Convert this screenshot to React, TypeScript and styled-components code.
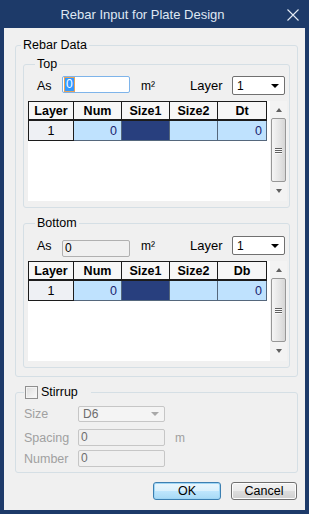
import { Fragment } from "react";
import styled, { createGlobalStyle } from "styled-components";

const GlobalStyle = createGlobalStyle`
  html, body {
    margin: 0;
    padding: 0;
    background: #1d3a69;
  }
  body {
    font-family: "Liberation Sans", Arial, sans-serif;
    font-size: 12px;
    color: #000;
  }
`;

type Row = { layer: string; num: string; dt: string };

const topRows: Row[] = [{ layer: "1", num: "0", dt: "0" }];
const bottomRows: Row[] = [{ layer: "1", num: "0", dt: "0" }];

function Scroll(): JSX.Element {
  return (
    <ScrollBar>
      <Arrow>
        <Tri $dir="up" />
      </Arrow>
      <Thumb>
        <Grip />
        <Grip />
        <Grip />
      </Thumb>
      <Arrow>
        <Tri $dir="down" />
      </Arrow>
    </ScrollBar>
  );
}

function RebarGrid({ lastCol, rows }: { lastCol: string; rows: Row[] }): JSX.Element {
  return (
    <GridBox>
      <Table>
        {["Layer", "Num", "Size1", "Size2", lastCol].map((h) => (
          <Cell key={h} $kind="head">{h}</Cell>
        ))}
        {rows.map((r, i) => (
          <Fragment key={i}>
            <Cell $kind="layer">{r.layer}</Cell>
            <Cell $kind="value">{r.num}</Cell>
            <Cell $kind="dark" />
            <Cell $kind="value" />
            <Cell $kind="value">{r.dt}</Cell>
          </Fragment>
        ))}
      </Table>
      <Scroll />
    </GridBox>
  );
}

function LayerSection({
  title,
  focused,
  lastCol,
  rows,
  top,
}: {
  title: string;
  focused: boolean;
  lastCol: string;
  rows: Row[];
  top: number;
}): JSX.Element {
  return (
    <Group $w={267} $mt={top} $ml={7} $pad="0 2px 6px 4px">
      <Legend $ml={7}>{title}</Legend>
      <FieldRow $mt={focused ? 5 : 6}>
        <AsLabel>As</AsLabel>
        <AsInput $focused={focused}>
          {focused ? <Selected>0</Selected> : "0"}
        </AsInput>
        <Unit>m²</Unit>
        <LayerLabel>Layer</LayerLabel>
        <Select>
          <span>1</span>
          <Caret />
        </Select>
      </FieldRow>
      <RebarGrid lastCol={lastCol} rows={rows} />
    </Group>
  );
}

export default function App(): JSX.Element {
  return (
    <>
      <GlobalStyle />
      <Window>
        <TitleBar>
          <Title>Rebar Input for Plate Design</Title>
          <Close>
            <svg width="12" height="12" viewBox="0 0 12 12">
              <path d="M0.5 0.5 L11.5 11.5 M11.5 0.5 L0.5 11.5" stroke="#e4ebf5" strokeWidth="1.1" />
            </svg>
          </Close>
        </TitleBar>
        <Client>
          <Group $w={283} $pad="0 0 8px 0">
            <Legend $ml={5}>Rebar Data</Legend>
            <LayerSection title="Top" focused lastCol="Dt" rows={topRows} top={5} />
            <LayerSection title="Bottom" focused={false} lastCol="Db" rows={bottomRows} top={8} />
          </Group>

          <Group $w={283} $mt={8} $pad="0 0 5px 8px">
            <CheckLegend>
              <CheckBox />
              <span>Stirrup</span>
            </CheckLegend>
            <StirRow $mt={7}>
              <DimLabel>Size</DimLabel>
              <DimSelect>
                <span>D6</span>
                <Caret $dim />
              </DimSelect>
            </StirRow>
            <StirRow $mt={7}>
              <DimLabel>Spacing</DimLabel>
              <DimInput>0</DimInput>
              <DimUnit>m</DimUnit>
            </StirRow>
            <StirRow $mt={4}>
              <DimLabel>Number</DimLabel>
              <DimInput>0</DimInput>
            </StirRow>
          </Group>

          <Buttons>
            <Button $primary $w={68}>OK</Button>
            <Button $w={66}>Cancel</Button>
          </Buttons>
        </Client>
      </Window>
    </>
  );
}

const Window = styled.div`
  box-sizing: border-box;
  width: 309px;
  height: 514px;
  display: flex;
  flex-direction: column;
  padding: 0 4px 4px 4px;
  background: #1d3a69;
`;

const TitleBar = styled.div`
  height: 28px;
  display: flex;
  align-items: center;
`;

const Title = styled.div`
  flex: 1;
  text-align: center;
  font-size: 13px;
  color: #dfe7f3;
`;

const Close = styled.div`
  width: 24px;
  display: flex;
  justify-content: center;
  align-items: center;
  padding-top: 1px;
`;

const Client = styled.div`
  flex: 1;
  display: flex;
  flex-direction: column;
  background: #f0f0f0;
  padding: 10px 7px 0 11px;
`;

const Group = styled.fieldset<{ $w: number; $mt?: number; $ml?: number; $pad: string }>`
  box-sizing: border-box;
  width: ${(p) => p.$w}px;
  min-width: 0;
  margin: ${(p) => p.$mt ?? 0}px 0 0 ${(p) => p.$ml ?? 0}px;
  padding: ${(p) => p.$pad};
  border: 1px solid #d5dfe5;
  border-radius: 3px;
`;

const Legend = styled.legend<{ $ml: number }>`
  margin-left: ${(p) => p.$ml}px;
  padding: 0 2px;
  font-size: 12.5px;
  line-height: 14px;
  color: #000;
`;

const CheckLegend = styled.legend`
  display: flex;
  align-items: center;
  gap: 3px;
  margin-left: 0;
  padding: 0 13px 0 1px;
  font-size: 12.5px;
  line-height: 14px;
`;

const CheckBox = styled.div`
  box-sizing: border-box;
  width: 13px;
  height: 13px;
  border: 1px solid #8f8f8f;
  background: linear-gradient(135deg, #dcdcdc, #fbfbfb);
  box-shadow: inset 0 0 0 1px #f4f4f4;
`;

const FieldRow = styled.div<{ $mt: number }>`
  display: flex;
  align-items: center;
  height: 19px;
  margin: ${(p) => p.$mt}px 0 0 9px;
`;

const AsLabel = styled.span`
  width: 25px;
  font-size: 12.5px;
`;

const AsInput = styled.div<{ $focused: boolean }>`
  box-sizing: border-box;
  align-self: flex-start;
  margin-top: ${(p) => (p.$focused ? 0 : 4)}px;
  width: 68px;
  height: 17px;
  padding: 1px 2px;
  line-height: 13px;
  border: 1px solid ${(p) => (p.$focused ? "#7eb4ea" : "#b0b0b0")};
  border-radius: 2px;
  background: ${(p) => (p.$focused ? "#fff" : "#f0f0f0")};
`;

const Selected = styled.span`
  display: inline-block;
  background: #3399ff;
  color: #fff;
  outline: 1px solid #e8a35a;
  padding: 0 1px;
`;

const Unit = styled.span`
  width: 49px;
  margin-left: 11px;
`;

const LayerLabel = styled.span`
  width: 42px;
  font-size: 13px;
`;

const Select = styled.div`
  box-sizing: border-box;
  width: 53px;
  height: 19px;
  display: flex;
  align-items: center;
  justify-content: space-between;
  padding: 0 5px 0 4px;
  border: 1px solid #707070;
  border-radius: 2px;
  background: #fff;
`;

const Caret = styled.div<{ $dim?: boolean }>`
  width: 0;
  height: 0;
  border-left: 4px solid transparent;
  border-right: 4px solid transparent;
  border-top: 4px solid ${(p) => (p.$dim ? "#a8a8a8" : "#000")};
`;

const GridBox = styled.div`
  display: flex;
  height: 100px;
  margin-top: 6px;
  background: #fff;
`;

const Table = styled.div`
  display: grid;
  grid-template-columns: 45px 48px 48px 48px 49px;
  grid-auto-rows: 20px;
  align-content: start;
  border-left: 1px solid #1c1c1c;
  align-self: flex-start;
`;

const cellBg = { head: "#f7f7f7", layer: "#eef0f4", value: "#bfe2fe", dark: "#283f7e" };

const Cell = styled.div<{ $kind: "head" | "layer" | "value" | "dark" }>`
  box-sizing: border-box;
  display: flex;
  align-items: center;
  justify-content: ${(p) => (p.$kind === "value" ? "flex-end" : "center")};
  padding: 0 4px;
  font-size: 12.5px;
  font-weight: ${(p) => (p.$kind === "head" ? 700 : 400)};
  color: ${(p) => (p.$kind === "value" ? "#1a2470" : "#000")};
  background: ${(p) => cellBg[p.$kind]};
  border-right: 1px solid ${(p) => (p.$kind === "head" || p.$kind === "layer" ? "#1c1c1c" : "#55677c")};
  border-bottom: ${(p) => (p.$kind === "head" ? 2 : 1)}px solid
    ${(p) => (p.$kind === "head" || p.$kind === "layer" ? "#1c1c1c" : "#55677c")};
  border-top: ${(p) => (p.$kind === "head" ? "1px solid #1c1c1c" : "none")};
`;

const ScrollBar = styled.div`
  width: 17px;
  margin-left: auto;
  display: flex;
  flex-direction: column;
  background: #f3f3f3;
  padding-bottom: 2px;
`;

const Arrow = styled.div`
  height: 17px;
  display: flex;
  align-items: center;
  justify-content: center;
`;

const Tri = styled.div<{ $dir: "up" | "down" }>`
  width: 0;
  height: 0;
  border-left: 3.5px solid transparent;
  border-right: 3.5px solid transparent;
  ${(p) => (p.$dir === "up" ? "border-bottom" : "border-top")}: 4px solid #606060;
`;

const Thumb = styled.div`
  flex: 1;
  margin: 0 1px;
  display: flex;
  flex-direction: column;
  align-items: center;
  justify-content: center;
  gap: 1px;
  border: 1px solid #979797;
  border-radius: 2px;
  background: linear-gradient(to right, #f5f5f5, #e4e4e4 60%, #d6d6d6);
`;

const Grip = styled.div`
  width: 7px;
  height: 1px;
  background: #5f5f5f;
  box-shadow: 0 1px 0 #fafafa;
`;

const StirRow = styled.div<{ $mt: number }>`
  display: flex;
  align-items: center;
  margin-top: ${(p) => p.$mt}px;
`;

const DimLabel = styled.span`
  width: 54px;
  color: #a0a0a0;
  font-size: 12.5px;
`;

const DimInput = styled.div`
  box-sizing: border-box;
  width: 87px;
  height: 17px;
  padding: 1px 2px;
  line-height: 13px;
  color: #6d6d6d;
  border: 1px solid #c6c6c6;
  border-radius: 2px;
  background: #f0f0f0;
`;

const DimSelect = styled.div`
  box-sizing: border-box;
  width: 87px;
  height: 16px;
  display: flex;
  align-items: center;
  justify-content: space-between;
  padding: 0 5px 0 4px;
  color: #6d6d6d;
  border: 1px solid #c6c6c6;
  border-radius: 2px;
  background: #f4f4f4;
`;

const DimUnit = styled.span`
  margin-left: 10px;
  color: #a0a0a0;
`;

const Buttons = styled.div`
  display: flex;
  justify-content: flex-end;
  gap: 10px;
  margin-top: 9px;
  padding-right: 1px;
`;

const Button = styled.button<{ $primary?: boolean; $w: number }>`
  box-sizing: border-box;
  width: ${(p) => p.$w}px;
  height: 18px;
  padding: 0;
  font-family: "Liberation Sans", Arial, sans-serif;
  font-size: 12.5px;
  color: #000;
  border-radius: 3px;
  border: 1px solid ${(p) => (p.$primary ? "#3c7fb1" : "#707070")};
  background: ${(p) =>
    p.$primary
      ? "linear-gradient(#eaf6fd, #d9f0fc 50%, #bee6fd 51%, #a7d9f5)"
      : "linear-gradient(#f2f2f2, #ebebeb 50%, #dddddd 51%, #cfcfcf)"};
  box-shadow: inset 0 0 0 1px ${(p) => (p.$primary ? "#9fd6f5" : "#fcfcfc")};
`;
